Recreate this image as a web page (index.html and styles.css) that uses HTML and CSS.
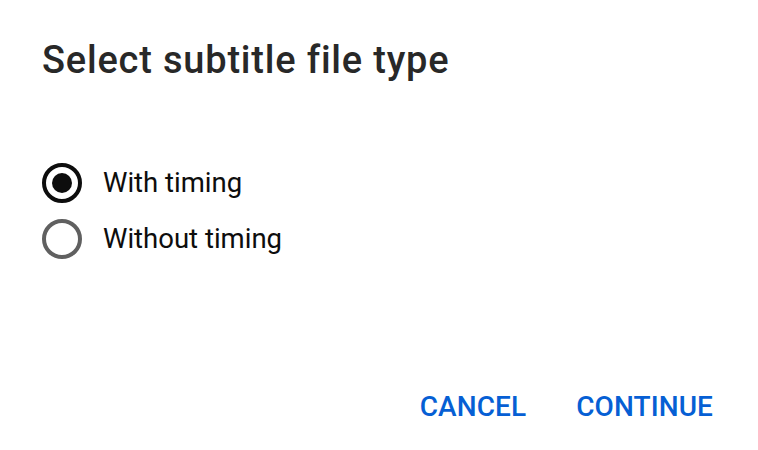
FILE: index.html
```html
<!DOCTYPE html>
<html lang="en">
<head>
<meta charset="utf-8">
<title>Select subtitle file type</title>
<link rel="stylesheet" href="styles.css">
</head>
<body>
<div class="dialog">
  <h1 class="title">Select subtitle file type</h1>
  <div class="options">
    <label class="option">
      <span class="radio checked"><span class="dot"></span></span>
      <span class="label">With timing</span>
    </label>
    <label class="option">
      <span class="radio"></span>
      <span class="label">Without timing</span>
    </label>
  </div>
  <div class="actions">
    <button class="btn">CANCEL</button>
    <button class="btn">CONTINUE</button>
  </div>
</div>
</body>
</html>
```
FILE: styles.css
```css
html, body {
  margin: 0;
  padding: 0;
  background: #ffffff;
}
body {
  width: 758px;
  height: 450px;
  overflow: hidden;
  font-family: Roboto, "Liberation Sans", Arial, sans-serif;
}
.dialog {
  box-sizing: border-box;
  height: 450px;
  padding: 38px 45px 0 42px;
  display: flex;
  flex-direction: column;
}
.title {
  margin: 0;
  font-size: 38px;
  line-height: 44px;
  font-weight: 500;
  letter-spacing: 0.8px;
  color: #282828;
}
.options {
  margin-top: 73px;
  display: flex;
  flex-direction: column;
}
.option {
  height: 56px;
  display: flex;
  align-items: center;
  gap: 21px;
}
.radio {
  box-sizing: border-box;
  width: 40px;
  height: 40px;
  border-radius: 50%;
  border: 4px solid #606060;
  display: flex;
  align-items: center;
  justify-content: center;
}
.radio.checked {
  border-color: #0d0d0d;
}
.dot {
  width: 20px;
  height: 20px;
  border-radius: 50%;
  background: #0d0d0d;
}
.label {
  font-size: 27.5px;
  line-height: 36px;
  color: #0d0d0d;
}
.actions {
  margin-top: 122px;
  display: flex;
  justify-content: flex-end;
  gap: 50px;
}
.btn {
  border: 0;
  background: none;
  padding: 0;
  font-family: inherit;
  font-size: 28px;
  line-height: 36px;
  font-weight: 500;
  letter-spacing: 0.1px;
  color: #065fd4;
  cursor: pointer;
}
```
